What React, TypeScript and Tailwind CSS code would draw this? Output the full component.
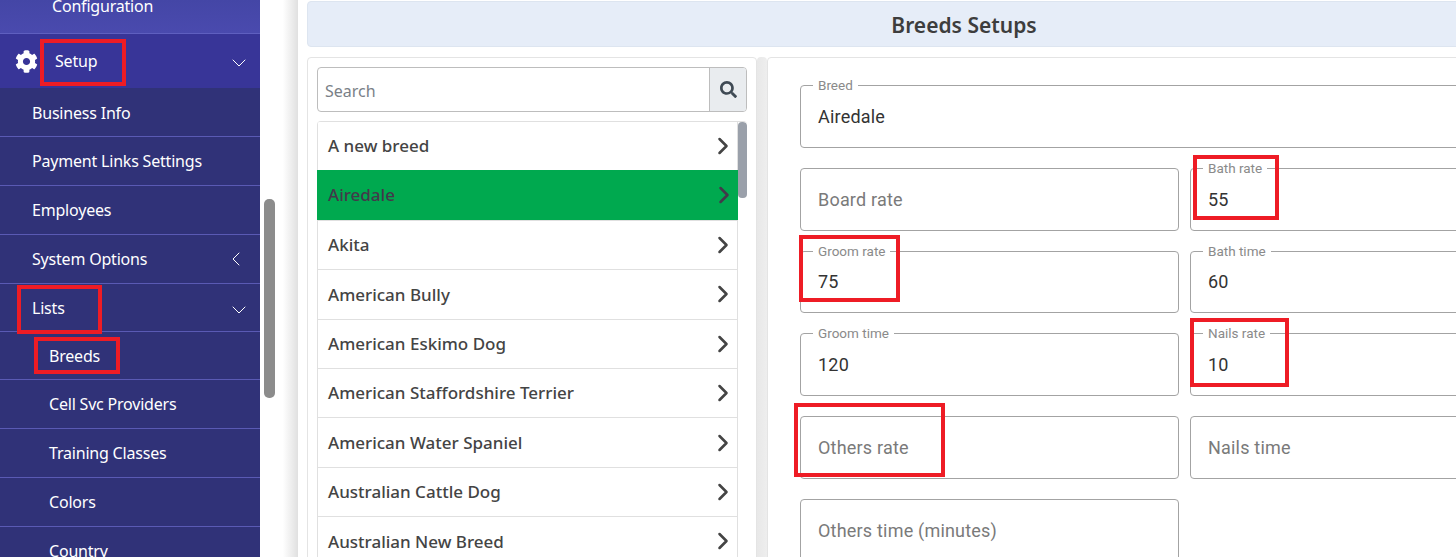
import React from 'react';
import { FaCog, FaSearch } from 'react-icons/fa';
import { ChevronDown, ChevronLeft, ChevronRight } from 'lucide-react';

const breeds = [
  'A new breed',
  'Airedale',
  'Akita',
  'American Bully',
  'American Eskimo Dog',
  'American Staffordshire Terrier',
  'American Water Spaniel',
  'Australian Cattle Dog',
  'Australian New Breed',
];

const SubItem: React.FC<{ label: string; nested?: boolean; short?: boolean; low?: boolean; icon?: React.ReactNode }> = ({
  label,
  nested,
  short,
  low,
  icon,
}) => (
  <div
    className={`flex items-center justify-between border-b border-[#5a5ab4] text-[16px] text-white ${
      short ? 'h-[48px]' : 'h-[49px]'
    } ${nested ? 'pl-[49px]' : 'pl-[32px]'} ${low ? 'pt-[2px]' : ''}`}
  >
    <span className="tracking-[-0.2px]">{label}</span>
    {icon}
  </div>
);

const Field: React.FC<{ label: string; value?: string; wide?: boolean }> = ({ label, value, wide }) => (
  <div className={`relative h-[62.7px] rounded-[4px] border border-[#a3a3a3] pl-[17px] ${wide ? 'col-span-2' : ''}`}>
    {value && (
      <span className="absolute left-[12px] top-[-9px] bg-white px-[5px] text-[13.5px] leading-[16px] text-[#8a8a8a]">
        {label}
      </span>
    )}
    <div className={`flex h-full items-center text-[18px] tracking-[0.2px] ${value ? 'text-[#333333]' : 'text-[#7a7a7a]'}`}>
      {value ?? label}
    </div>
  </div>
);

const Mark: React.FC<{ className: string }> = ({ className }) => (
  <div className={`pointer-events-none absolute border-[4px] border-[#ee1c25] ${className}`} />
);

const App: React.FC = () => {
  return (
    <div className="relative flex h-[557px] w-[1456px] overflow-hidden bg-white font-['Noto_Sans',sans-serif]">
      {/* sidebar, scrolled part way down */}
      <aside className="h-full w-[260px] shrink-0 overflow-hidden bg-[#303278]">
        <div className="h-[34px] border-b border-[#5f5fc0] bg-gradient-to-b from-[#4446a6] to-[#4a4aae] pl-[52px] text-[16px] leading-[13px] text-white">
          <span className="tracking-[-0.2px]">Configuration</span>
        </div>
        <div className="flex h-[54px] items-center justify-between bg-[#383598] pl-[15px] pr-[9px] text-[16px] text-white">
          <div className="flex items-center">
            <FaCog className="h-[23px] w-[23px]" />
            <span className="ml-[17px] tracking-[-0.2px]">Setup</span>
          </div>
          <ChevronDown className="mt-[4px] h-[24px] w-[24px]" strokeWidth={1} />
        </div>
        <SubItem label="Business Info" low />
        <SubItem label="Payment Links Settings" />
        <SubItem label="Employees" />
        <SubItem label="System Options" icon={<ChevronLeft className="mr-[12px] h-[24px] w-[24px]" strokeWidth={1} />} />
        <SubItem label="Lists" short icon={<ChevronDown className="mr-[9px] mt-[4px] h-[24px] w-[24px]" strokeWidth={1} />} />
        <SubItem label="Breeds" nested short />
        <SubItem label="Cell Svc Providers" nested />
        <SubItem label="Training Classes" nested />
        <SubItem label="Colors" nested />
        <SubItem label="Country" nested />
      </aside>

      {/* sidebar scrollbar */}
      <div className="h-full w-[38px] shrink-0 bg-gradient-to-r from-white from-[60%] to-[#e0e0e0] pl-[4px] pt-[199px]">
        <div className="h-[199px] w-[11px] rounded-[5px] bg-[#8c8c8c]" />
      </div>

      <main className="w-[1333px] shrink-0 bg-white pl-[9px] pt-[1px]">
        <div className="flex h-[46px] w-[1314px] items-center justify-center rounded-[4px] border border-[#dde5f0] bg-[#e6edf8] pt-[3px] text-[21px] font-semibold text-[#3d3d3d]">
          Breeds Setups
        </div>

        <div className="mt-[10px] flex w-[1314px]">
          <section className="h-[520px] w-[450px] shrink-0 rounded-[4px] border border-[#e4e4e4] bg-white pl-[9px] pr-[9px] pt-[9px]">
            <div className="flex h-[45px] overflow-hidden rounded-[4px] border border-[#bdbdbd]">
              <div className="flex flex-1 items-center pl-[7px] pt-[2px] text-[16px] text-[#7a8087]">Search</div>
              <div className="flex w-[37px] items-center justify-center border-l border-[#bdbdbd] bg-[#e9ecef] text-[#3f4a54]">
                <FaSearch className="h-[17px] w-[17px]" />
              </div>
            </div>
            <div className="relative mt-[9px] h-[460px] overflow-hidden rounded-t-[4px] border-t border-[#e0e0e0]">
              <div className="w-[421px] border-l border-[#e0e0e0]">
                {breeds.map((breed) => (
                  <div
                    key={breed}
                    className={`flex items-center justify-between border-b border-[#e0e0e0] text-[17px] font-medium ${
                      breed === 'Airedale'
                        ? 'relative ml-[-1px] mt-[-1px] h-[50.4px] bg-[#00a94f] pl-[11px] text-[#43394a]'
                        : 'h-[49.4px] border-r bg-white pl-[10px] text-[#444444]'
                    }`}
                  >
                    <span>{breed}</span>
                    <ChevronRight className="h-[28px] w-[28px]" strokeWidth={2.2} />
                  </div>
                ))}
              </div>
              <div className="absolute right-0 top-0 h-[76px] w-[9px] rounded-[4px] bg-[#9aa0aa]" />
            </div>
          </section>

          {/* shaded gutter between the two cards */}
          <div className="h-[520px] w-[10px] shrink-0 rounded-t-[4px] bg-gradient-to-r from-[#e8e8e8] to-[#eeeeee]" />

          <section className="h-[520px] flex-1 rounded-[4px] border border-[#e4e4e4] bg-white pl-[32px] pt-[27.25px] font-['Roboto',sans-serif]">
            <div className="grid w-[769px] grid-cols-[379px_379px] gap-x-[11px] gap-y-[20px]">
              <Field label="Breed" value="Airedale" wide />
              <Field label="Board rate" />
              <Field label="Bath rate" value="55" />
              <Field label="Groom rate" value="75" />
              <Field label="Bath time" value="60" />
              <Field label="Groom time" value="120" />
              <Field label="Nails rate" value="10" />
              <Field label="Others rate" />
              <Field label="Nails time" />
              <Field label="Others time (minutes)" />
            </div>
          </section>
        </div>
      </main>

      {/* red annotation boxes */}
      <Mark className="left-[40px] top-[39px] h-[47px] w-[86px]" />
      <Mark className="left-[17px] top-[285px] h-[49px] w-[85px]" />
      <Mark className="left-[34px] top-[337px] h-[37px] w-[86px]" />
      <Mark className="left-[1193px] top-[155px] h-[65px] w-[86px]" />
      <Mark className="left-[799px] top-[235px] h-[67px] w-[101px]" />
      <Mark className="left-[1190px] top-[318px] h-[69px] w-[99px]" />
      <Mark className="left-[794px] top-[403px] h-[74px] w-[151px]" />
    </div>
  );
};

export default App;
